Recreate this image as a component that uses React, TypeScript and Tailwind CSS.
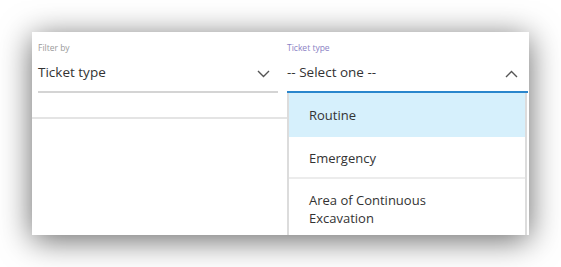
import React from "react";

const Chevron = ({ up }: { up?: boolean }) => (
  <svg width="13" height="8" viewBox="0 0 13 8" className="shrink-0">
    <path
      d={up ? "M1 7 L6.5 1.5 L12 7" : "M1 1 L6.5 6.5 L12 1"}
      fill="none"
      stroke="#555"
      strokeWidth="1.4"
    />
  </svg>
);

export default function App() {
  return (
    <div
      className="w-[561px] h-[267px] bg-white pt-[32px] pl-[32px]"
      style={{ fontFamily: '"Open Sans", "Noto Sans", sans-serif' }}
    >
      <div className="w-[497px] h-[203px] bg-white overflow-hidden flex shadow-[0_5px_30px_rgba(0,0,0,0.6)]">
        {/* Left column */}
        <div className="w-[255px] flex flex-col">
          <div className="pl-[6px] pr-[9px]">
            <div className="h-[12px] mt-[10px] text-[8.5px] leading-[12px] text-[#9a9a9a]">Filter by</div>
            <div className="h-[20px] mt-[8px] flex items-center justify-between text-[13.5px] leading-[20px] text-[#333]">
              <span>Ticket type</span>
              <span className="mr-[8px] mt-[4px]">
                <Chevron />
              </span>
            </div>
            <div className="h-[2px] mt-[9px] bg-[#d4d4d4]" />
          </div>
          <div className="h-[2px] mt-[24px] bg-[#e4e4e4]" />
        </div>
        {/* Right column */}
        <div className="w-[241px] flex flex-col">
          <div className="h-[12px] mt-[10px] text-[8.5px] leading-[12px] text-[#8b82c4]">Ticket type</div>
          <div className="h-[20px] mt-[8px] flex items-center justify-between pr-[10px] text-[13.5px] leading-[20px] text-[#333]">
            <span>-- Select one --</span>
            <span className="mt-[4px]">
              <Chevron up />
            </span>
          </div>
          <div className="h-[2px] mt-[9px] bg-[#2a86cc]" />
          <div className="w-[240px] flex-1 border-x-2 border-[#dcdcdc] text-[13px] text-[#333]">
            <div className="h-[44px] flex items-center pl-[20px] pt-[2px] bg-[#d6f0fc]">Routine</div>
            <div className="h-[42px] flex items-center pl-[20px] pt-[3px] border-b-2 border-[#ececec]">Emergency</div>
            <div className="pl-[20px] pt-[12px] leading-[18px]">
              Area of Continuous
              <br />
              Excavation
            </div>
          </div>
        </div>
      </div>
    </div>
  );
}
